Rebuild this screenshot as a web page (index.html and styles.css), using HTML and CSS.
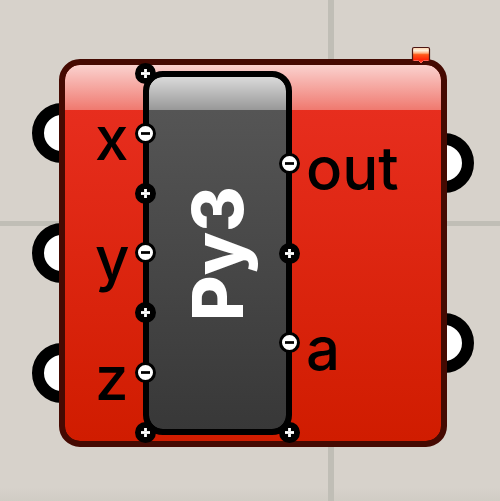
FILE: index.html
```html
<!DOCTYPE html>
<html lang="en">
<head>
<meta charset="utf-8">
<title>Py3 component</title>
<link rel="stylesheet" href="styles.css">
</head>
<body>
<main class="canvas">
  <section class="node" aria-label="Py3">
    <div class="grips grips-in"><i class="grip"></i><i class="grip"></i><i class="grip"></i></div>
    <div class="grips grips-out"><i class="grip"></i><i class="grip"></i></div>
    <div class="body">
      <ul class="ports inputs">
        <li class="port"><span>x</span></li>
        <li class="port"><span>y</span></li>
        <li class="port"><span>z</span></li>
      </ul>
      <div class="core">
        <h1 class="name">Py3</h1>
        <div class="knobs knobs-in">
          <button class="knob add" aria-label="Insert input"></button>
          <button class="knob remove" aria-label="Remove x"></button>
          <button class="knob add" aria-label="Insert input"></button>
          <button class="knob remove" aria-label="Remove y"></button>
          <button class="knob add" aria-label="Insert input"></button>
          <button class="knob remove" aria-label="Remove z"></button>
          <button class="knob add" aria-label="Insert input"></button>
        </div>
        <div class="knobs knobs-out">
          <button class="knob remove" aria-label="Remove out"></button>
          <button class="knob add" aria-label="Insert output"></button>
          <button class="knob remove" aria-label="Remove a"></button>
          <button class="knob add" aria-label="Insert output"></button>
        </div>
      </div>
      <ul class="ports outputs">
        <li class="port"><span>out</span></li>
        <li class="port"><span>a</span></li>
      </ul>
    </div>
    <svg class="balloon" width="20" height="18" viewBox="0 0 20 18" aria-hidden="true">
      <defs>
        <linearGradient id="flame" x1="0" y1="0" x2="0" y2="1">
          <stop offset="0" stop-color="#ffd0a8"/>
          <stop offset=".2" stop-color="#fff0dc"/>
          <stop offset=".36" stop-color="#ffb080"/>
          <stop offset=".46" stop-color="#ff5a1c"/>
          <stop offset=".8" stop-color="#ff2408"/>
          <stop offset="1" stop-color="#ff5040"/>
        </linearGradient>
      </defs>
      <path d="M3 1.500h14q1.500 0 1.500 1.500v11.500h-6l-2.500 2.500-2.500-2.500h-6v-11.500q0-1.500 1.500-1.500z" fill="url(#flame)"/>
      <path d="M1.500 14.500v-11.500q0-1.500 1.500-1.500h14q1.500 0 1.500 1.500v11.500" fill="none" stroke="#4c1512" stroke-width="1.200"/>
      <path d="M2.500 14.500h5l2.500 2.500 2.500-2.500h5" fill="none" stroke="#ff6458" stroke-width="1"/>
    </svg>
  </section>
</main>
</body>
</html>
```
FILE: styles.css
```css
* {
  box-sizing: border-box;
}

body {
  margin: 0;
  font-family: Inter, "Liberation Sans", sans-serif;
}

.canvas {
  position: relative;
  min-height: 100vh;
  overflow: hidden;
  background:
    linear-gradient(#c0beb6, #c0beb6) 328px 0 / 6px 100% no-repeat,
    linear-gradient(#c0beb6, #c0beb6) 0 221px / 100% 5px no-repeat,
    linear-gradient(to top, #d0ccc4, #d7d2cb 14px);
}

/* The component is placed freely on the canvas. */
.node {
  position: absolute;
  top: 59px;
  left: 59px;
}

.body {
  position: relative;
  display: grid;
  grid-template-columns: 78px 149px 149px;
  padding: 8px 0;
  border: 6px solid #450a02;
  border-radius: 21px;
  background:
    linear-gradient(rgba(255, 255, 255, 0.78), rgba(255, 255, 255, 0.36)) 0 0 / 100% 45px no-repeat padding-box,
    linear-gradient(#ea3022, #d01c00) padding-box,
    #450a02;
}

/* Grips: half hidden behind the body's edge */
.grips {
  position: absolute;
  top: 14px;
  bottom: 14px;
  display: flex;
  flex-direction: column;
  justify-content: space-around;
}

.grips-in {
  left: -27px;
}

.grips-out {
  right: -27px;
}

.grip {
  width: 60px;
  height: 60px;
  border: 12px solid #000;
  border-radius: 50%;
  background: #fff;
}

/* Port names */
.ports {
  display: flex;
  flex-direction: column;
  height: 360px;
  margin: 0;
  padding: 0;
  list-style: none;
}

.port {
  display: flex;
  flex: 1;
  align-items: center;
  padding-top: 10px;
  color: #000;
  font-size: 60px;
  font-weight: 450;
  line-height: 72px;
}

.inputs .port {
  padding-left: 30px;
}

.outputs .port {
  padding-left: 14px;
}

/* Centre capsule */
.core {
  position: relative;
  display: flex;
  align-items: center;
  justify-content: center;
  height: 364px;
  margin: -2px 0;
  border: 6px solid #000;
  border-radius: 20px;
  background:
    linear-gradient(#dadada, #989898) 0 0 / 100% 33px no-repeat padding-box,
    linear-gradient(#585858, #383838) padding-box,
    #000;
}

.name {
  margin: 0;
  color: #fff;
  font-size: 70px;
  font-weight: 800;
  line-height: 84px;
  writing-mode: vertical-rl;
  transform: rotate(180deg);
}

/* Knobs sit over the capsule's left and right edges. */
.knobs {
  position: absolute;
  bottom: -14px;
  display: flex;
  flex-direction: column;
  justify-content: space-between;
}

.knobs-in {
  top: -14px;
  left: -14px;
}

.knobs-out {
  top: 76px;
  right: -14px;
}

.knob {
  display: block;
  width: 21px;
  height: 21px;
  padding: 0;
  border: 3px solid #000;
  border-radius: 50%;
}

.add {
  background:
    linear-gradient(#ddd, #fff, #ddd) center / 9px 3px no-repeat,
    linear-gradient(to right, #ddd, #fff, #ddd) center / 3px 9px no-repeat,
    #000;
}

.remove {
  background:
    linear-gradient(#333, #000, #333) center / 9px 3px no-repeat,
    #fff;
}

.balloon {
  position: absolute;
  top: -13px;
  right: 16px;
}
```
